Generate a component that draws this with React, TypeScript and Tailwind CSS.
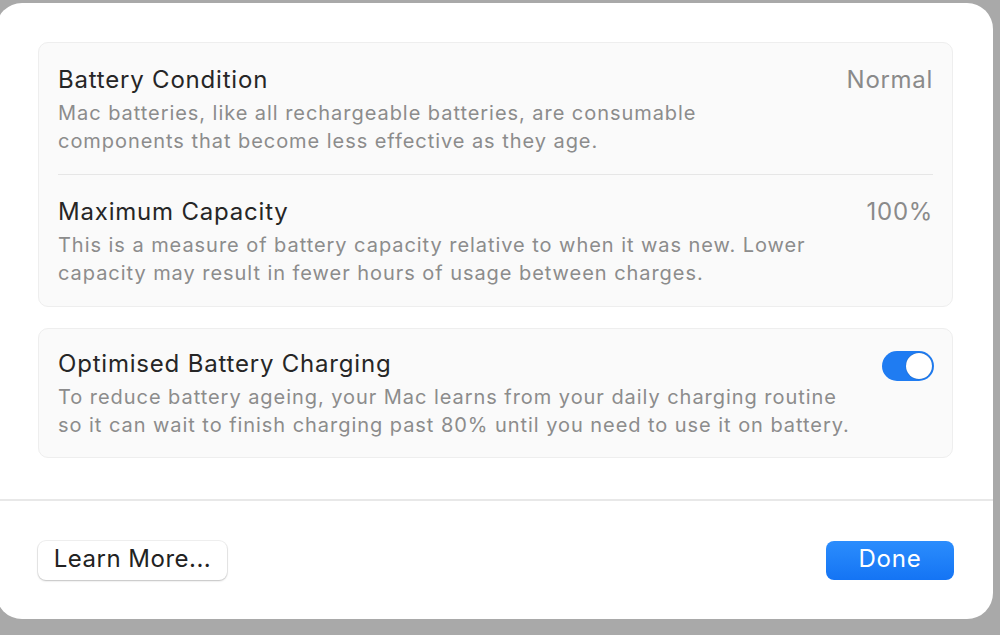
const font = { fontFamily: "Inter, 'Noto Sans', sans-serif" };

function Row({ title, value, desc }: { title: string; value?: string; desc: string[] }) {
  return (
    <div className="pt-[22px] pb-[19px]">
      <div className="flex items-center justify-between h-[30px]">
        <span className="text-[24px] tracking-[0.8px] text-[#262626]">{title}</span>
        {value && <span className="text-[24px] tracking-[0.7px] text-[#8a8a8a]">{value}</span>}
      </div>
      <div className="mt-[4px] text-[20px] leading-[28px] tracking-[0.95px] text-[#8c8c8c]">
        {desc.map((l) => (
          <div key={l}>{l}</div>
        ))}
      </div>
    </div>
  );
}

export default function App() {
  return (
    <div className="w-[1000px] h-[635px] overflow-hidden bg-[#a9a9a9]" style={font}>
      <div className="ml-[-4px] mt-[3px] w-[997px] h-[616px] rounded-[26px] bg-white flex flex-col">
        <div className="pt-[39px] pl-[42px] pr-[40px]">
          <div className="rounded-[10px] border border-[#eeeeee] bg-[#fafafa] px-[19px]">
            <Row
              title="Battery Condition"
              value="Normal"
              desc={[
                "Mac batteries, like all rechargeable batteries, are consumable",
                "components that become less effective as they age.",
              ]}
            />
            <div className="h-px bg-[#e6e6e6]" />
            <Row
              title="Maximum Capacity"
              value="100%"
              desc={[
                "This is a measure of battery capacity relative to when it was new. Lower",
                "capacity may result in fewer hours of usage between charges.",
              ]}
            />
          </div>
          <div className="mt-[21px] rounded-[10px] border border-[#eeeeee] bg-[#fafafa] px-[19px] pt-[20px] pb-[18px] relative">
            <div className="h-[30px] flex items-center text-[24px] tracking-[0.8px] text-[#262626]">
              Optimised Battery Charging
            </div>
            <div className="mt-[4px] text-[20px] leading-[28px] tracking-[0.95px] text-[#8c8c8c]">
              <div>To reduce battery ageing, your Mac learns from your daily charging routine</div>
              <div>so it can wait to finish charging past 80% until you need to use it on battery.</div>
            </div>
            <div className="absolute right-[18px] top-[22px] w-[52px] h-[30px] rounded-full bg-[#1f7cf2] flex items-center justify-end pr-[2px]">
              <div className="w-[26px] h-[26px] rounded-full bg-white shadow-[0_0_1px_rgba(0,0,0,0.4)]" />
            </div>
          </div>
        </div>
        <div className="mt-[41px] h-[2px] bg-[#e8e8e8]" />
        <div className="flex justify-between items-center pl-[42px] pr-[39px] pt-[40px]">
          <button className="h-[39px] w-[189px] rounded-[8px] bg-white pb-[4px] text-[24px] leading-[36px] tracking-[0.5px] text-[#222] shadow-[0_0_0_1px_rgba(0,0,0,0.06),0_1px_2px_rgba(0,0,0,0.2)]">
            Learn More...
          </button>
          <button className="h-[39px] w-[128px] rounded-[8px] bg-gradient-to-b from-[#2b8dfd] to-[#1474f4] pb-[4px] text-[24px] leading-[36px] tracking-[0.8px] text-white">
            Done
          </button>
        </div>
      </div>
    </div>
  );
}
